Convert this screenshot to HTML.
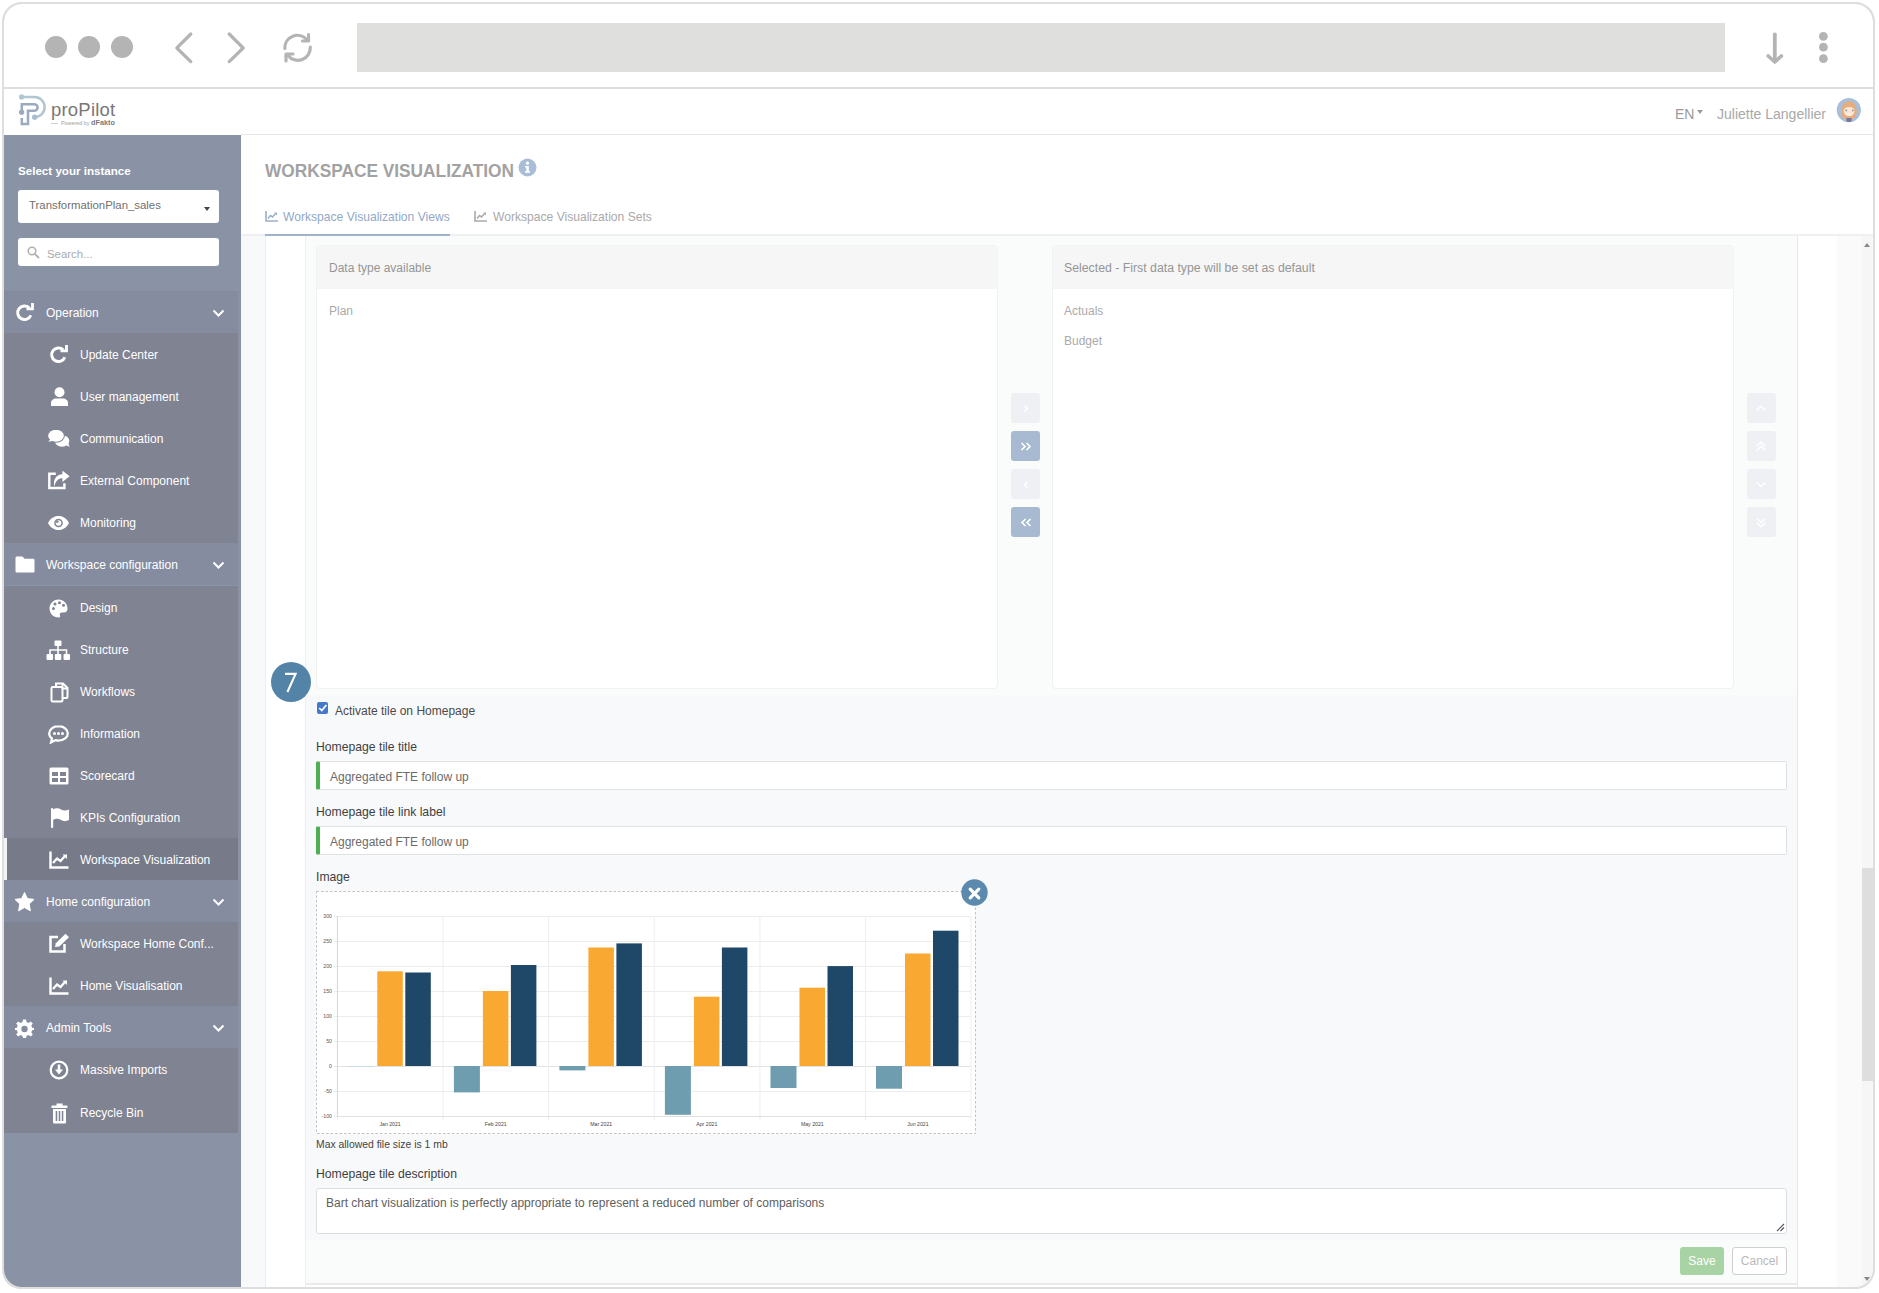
<!DOCTYPE html>
<html><head><meta charset="utf-8">
<style>
*{box-sizing:border-box;margin:0;padding:0}
html,body{width:1879px;height:1293px;overflow:hidden;background:#fff;font-family:"Liberation Sans",sans-serif}
.a{position:absolute}
#frame{position:absolute;left:2px;top:2px;width:1873px;height:1287px;border:2px solid #dedede;border-radius:20px;overflow:hidden;background:#fff}
.dot{position:absolute;width:22px;height:22px;border-radius:50%;background:#b4b4b4;top:36px}
.sb{position:absolute;left:4px;top:135px;width:237px;height:1152px;background:#8a93a6}
.hd{position:absolute;left:0;width:234px;height:42px;background:#868c9f;color:#fff;font-size:12px}
.sub{position:absolute;left:0;width:234px;background:#7f8392}
.it{position:absolute;left:0;width:234px;height:42px;color:#fff;font-size:12px}
.it span,.hd span{position:absolute;top:15px;white-space:nowrap}
.it span{left:76px}
.hd span{left:42px}
.ico{position:absolute;transform:translateY(1px)}
</style></head><body>
<div id="frame"></div>
<!-- browser toolbar -->
<div class="dot" style="left:45px"></div>
<div class="dot" style="left:78px"></div>
<div class="dot" style="left:111px"></div>
<svg class="a" style="left:160px;top:20px" width="170" height="55" viewBox="160 20 170 55">
  <polyline points="190.8,34 176.8,48 190.8,61.6" fill="none" stroke="#b4b4b4" stroke-width="3.2" stroke-linecap="round" stroke-linejoin="round"/>
  <polyline points="229.2,34 243.2,48 229.2,61.6" fill="none" stroke="#b4b4b4" stroke-width="3.2" stroke-linecap="round" stroke-linejoin="round"/>
  <path d="M284.8,48.5 A12.5,12.5 0 0 1 307,40" fill="none" stroke="#b4b4b4" stroke-width="3.2" stroke-linecap="round"/>
  <path d="M302.5,41 H308.5 V34.5" fill="none" stroke="#b4b4b4" stroke-width="3.2" stroke-linecap="round" stroke-linejoin="round"/>
  <path d="M310.3,47 A12.5,12.5 0 0 1 288,55.5" fill="none" stroke="#b4b4b4" stroke-width="3.2" stroke-linecap="round"/>
  <path d="M293,54 H286 V61" fill="none" stroke="#b4b4b4" stroke-width="3.2" stroke-linecap="round" stroke-linejoin="round"/>
</svg>
<svg class="a" style="left:1760px;top:28px" width="75" height="40" viewBox="1760 28 75 40">
  <path d="M1774.8,34.3 V61" stroke="#b4b4b4" stroke-width="3.8" stroke-linecap="round"/>
  <polyline points="1768.2,56 1774.8,62 1781.4,56" fill="none" stroke="#b4b4b4" stroke-width="3.6" stroke-linecap="round" stroke-linejoin="round"/>
  <circle cx="1823.4" cy="36.3" r="4.4" fill="#b4b4b4"/>
  <circle cx="1823.4" cy="47.2" r="4.4" fill="#b4b4b4"/>
  <circle cx="1823.4" cy="58.6" r="4.4" fill="#b4b4b4"/>
</svg>
<div class="a" style="left:357px;top:23px;width:1368px;height:49px;background:#dfdfde"></div>
<div class="a" style="left:4px;top:87px;width:1869px;height:2px;background:#dedede"></div>
<!-- app header -->
<svg class="a" style="left:0px;top:85px" width="60" height="50" viewBox="0 85 60 50">
  <path d="M21.6,96.9 H34.3 A10.2,10.2 0 0 1 34.6,117.3" fill="none" stroke="#b2c5d3" stroke-width="2.5"/>
  <circle cx="21.6" cy="96.9" r="2.6" fill="#b2c5d3"/>
  <circle cx="34.6" cy="117.2" r="2.6" fill="#a9bccc"/>
  <path d="M21.8,112 V104.2 H34.3 A3.3,3.3 0 0 1 34.3,110.8 H28 V124 H21.8 V118" fill="none" stroke="#9aabc0" stroke-width="2.5"/>
  <circle cx="21.6" cy="112.2" r="2.6" fill="#9aabc0"/>
</svg>
<div class="a" style="left:51px;top:98.5px;font-size:18.5px;color:#7a7676;letter-spacing:0.2px">proPilot</div>
<div class="a" style="left:51px;top:123px;width:7px;height:1px;background:#cfcfcf"></div>
<div class="a" style="left:61px;top:119.5px;font-size:5.4px;color:#a0a0a0">Powered by</div>
<div class="a" style="left:91px;top:118px;font-size:7.3px;font-weight:bold;color:#7a7a7a">dFakto</div>
<div class="a" style="left:241px;top:134px;width:1632px;height:1px;background:#e8e8e8"></div>
<div class="a" style="left:1675px;top:106px;font-size:14px;color:#9a9a9a">EN</div>
<div class="a" style="left:1697px;top:110px;width:0;height:0;border-left:3.5px solid transparent;border-right:3.5px solid transparent;border-top:4px solid #9a9a9a"></div>
<div class="a" style="left:1717px;top:106px;font-size:14px;color:#a8a8a8">Juliette Langellier</div>
<svg class="a" style="left:1836px;top:98px" width="26" height="26" viewBox="0 0 26 26">
  <circle cx="12.8" cy="12.1" r="12.1" fill="#a9bfd9"/>
  <path d="M5,19 C7,17 5.5,14 6,10 C7,5 10,3 13,3.2 C17,3.3 20,6 20.3,10.5 C20.5,13 21.5,14 20.5,15.5 C19.5,17 20.5,18.5 19,20 L16,20.5 L9,20.5 Z" fill="#e5ac7e"/>
  <ellipse cx="13.1" cy="13" rx="5.4" ry="5.2" fill="#fbe7d2"/>
  <path d="M7.7,11.5 C8,7 11,5.5 13.5,6.5 C16,5.5 18.5,8 18.5,11.5 C17,9.5 15,8.5 13.5,9.5 C11.5,8.5 9.5,9.5 7.7,11.5Z" fill="#e5ac7e"/>
  <circle cx="10.3" cy="12.4" r="0.9" fill="#8a8f99"/>
  <circle cx="16.8" cy="12.4" r="0.9" fill="#8a8f99"/>
  <ellipse cx="13.2" cy="15.9" rx="1.7" ry="0.9" fill="#f4f0f0"/>
  <path d="M10.4,20 H15.6 V23.6 C14,24 12,24 10.4,23.6Z" fill="#7b7790"/>
</svg>

<!-- sidebar -->
<div class="sb">
  <div class="a" style="left:14px;top:29px;font-size:11.6px;font-weight:bold;color:#fff">Select your instance</div>
  <div class="a" style="left:14px;top:55px;width:201px;height:33px;background:#fff;border-radius:3px"></div>
  <div class="a" style="left:25px;top:63.5px;font-size:11.4px;color:#707070">TransformationPlan_sales</div>
  <div class="a" style="left:200px;top:72px;width:0;height:0;border-left:3.5px solid transparent;border-right:3.5px solid transparent;border-top:4px solid #444"></div>
  <div class="a" style="left:14px;top:103px;width:201px;height:28px;background:#fff;border-radius:3px"></div>
  <svg class="a" style="left:23px;top:111px" width="13" height="13" viewBox="0 0 13 13"><circle cx="5" cy="5" r="3.8" fill="none" stroke="#b0b0b0" stroke-width="1.5"/><line x1="7.8" y1="7.8" x2="11.5" y2="11.5" stroke="#b0b0b0" stroke-width="1.8" stroke-linecap="round"/></svg>
  <div class="a" style="left:43px;top:112.5px;font-size:11.4px;color:#aaa">Search...</div>
</div>

<div class="sb" style="background:transparent">
  <!-- Operation -->
  <div class="hd" style="top:156.00px"><svg class="ico" style="left:11px;top:11px" width="20" height="20" viewBox="0 0 20 20"><path d="M15.8,12.2 A6.8,6.8 0 1 1 14.2,4.8" fill="none" stroke="#fff" stroke-width="3"/><path d="M11.5,5.8 L17.5,5.8 L17.5,-0.2" fill="none" stroke="#fff" stroke-width="2.8" stroke-linejoin="miter"/></svg><span>Operation</span><svg class="ico" style="left:208px;top:17px" width="13" height="9" viewBox="0 0 13 9"><polyline points="1.5,1.5 6.5,6.5 11.5,1.5" fill="none" stroke="#fff" stroke-width="2"/></svg></div>
  <div class="sub" style="top:198.08px;height:210.40px">
    <div class="it" style="top:0"><svg class="ico" style="left:45px;top:11px" width="20" height="20" viewBox="0 0 20 20"><path d="M15.8,12.2 A6.8,6.8 0 1 1 14.2,4.8" fill="none" stroke="#fff" stroke-width="3"/><path d="M11.5,5.8 L17.5,5.8 L17.5,-0.2" fill="none" stroke="#fff" stroke-width="2.8"/></svg><span>Update Center</span></div>
    <div class="it" style="top:42.08px"><svg class="ico" style="left:45.5px;top:11px" width="19" height="20" viewBox="0 0 19 20"><circle cx="9.5" cy="5.3" r="5" fill="#fff"/><path d="M1,19 V16 C1,13 3.5,11.5 6,11.5 H13 C15.5,11.5 18,13 18,16 V19 Z" fill="#fff"/></svg><span>User management</span></div>
    <div class="it" style="top:84.16px"><svg class="ico" style="left:43px;top:12px" width="24" height="20" viewBox="47 430.24 24 20"><ellipse cx="62" cy="441.2" rx="7.3" ry="5.8" fill="#fff"/><path d="M65.5,445 L69.6,447.2 L68.2,443Z" fill="#fff"/><ellipse cx="56" cy="436" rx="8.9" ry="6.9" fill="#7f8392"/><ellipse cx="56" cy="436" rx="7.9" ry="5.9" fill="#fff"/><path d="M50.5,439.5 L48.2,442 L53.5,441Z" fill="#fff"/></svg><span>Communication</span></div>
    <div class="it" style="top:126.24px"><svg class="ico" style="left:44px;top:11px" width="23" height="21" viewBox="48 471.32 23 21"><path d="M55.8,474.1 H49.3 V488.3 H64.4 V483.6" fill="none" stroke="#fff" stroke-width="2.4"/><path d="M54.2,486.8 C53,480 56,475 62.4,474.6 V470.9 L69.6,476.6 L62.4,482.4 V478.6 C58.5,478.6 55.8,481 54.2,486.8Z" fill="#fff"/></svg><span>External Component</span></div>
    <div class="it" style="top:168.32px"><svg class="ico" style="left:43px;top:13px" width="23" height="16" viewBox="0 0 23 16"><path d="M1,8 C4,2.5 8,1 11.5,1 C15,1 19,2.5 22,8 C19,13.5 15,15 11.5,15 C8,15 4,13.5 1,8Z" fill="#fff"/><circle cx="11.5" cy="8" r="4.3" fill="#7f8392"/><circle cx="11.5" cy="8" r="2.8" fill="#fff"/><circle cx="10.3" cy="6.8" r="1.3" fill="#7f8392"/></svg><span>Monitoring</span></div>
  </div>
  <!-- Workspace configuration -->
  <div class="hd" style="top:408.48px"><svg class="ico" style="left:11px;top:12px" width="20" height="17" viewBox="0 0 20 17"><path d="M0.5,2 C0.5,1 1,0.5 2,0.5 H7.5 L9.5,2.8 H18 C19,2.8 19.5,3.3 19.5,4.3 V15 C19.5,16 19,16.5 18,16.5 H2 C1,16.5 0.5,16 0.5,15Z" fill="#fff"/></svg><span>Workspace configuration</span><svg class="ico" style="left:208px;top:17px" width="13" height="9" viewBox="0 0 13 9"><polyline points="1.5,1.5 6.5,6.5 11.5,1.5" fill="none" stroke="#fff" stroke-width="2"/></svg></div>
  <div class="sub" style="top:450.56px;height:294.56px">
    <div class="it" style="top:0"><svg class="ico" style="left:45px;top:12px" width="19" height="19" viewBox="0 0 19 19"><path d="M9.5,0.5 C4.5,0.5 0.5,4.5 0.5,9.5 C0.5,14.5 4.5,18.5 9.5,18.5 C11,18.5 11.5,17.5 11,16.5 C10.3,15 11,13.5 12.8,13.5 H15 C17,13.5 18.5,12 18.5,9.5 C18.5,4.5 14.5,0.5 9.5,0.5Z" fill="#fff"/><circle cx="4.5" cy="9.5" r="1.5" fill="#7f8392"/><circle cx="6" cy="5" r="1.5" fill="#7f8392"/><circle cx="10.5" cy="3.8" r="1.5" fill="#7f8392"/><circle cx="14.5" cy="6.3" r="1.5" fill="#7f8392"/></svg><span>Design</span></div>
    <div class="it" style="top:42.08px"><svg class="ico" style="left:42px;top:11px" width="25" height="21" viewBox="0 0 25 21"><rect x="8.5" y="0.5" width="7" height="5.5" rx="1" fill="#fff"/><path d="M12,6 V10 M4,14 V10 H20.5 V14 M12,10 V14" fill="none" stroke="#fff" stroke-width="1.6"/><rect x="0.5" y="14" width="6.5" height="6" rx="1" fill="#fff"/><rect x="8.8" y="14" width="6.5" height="6" rx="1" fill="#fff"/><rect x="17.5" y="14" width="6.5" height="6" rx="1" fill="#fff"/></svg><span>Structure</span></div>
    <div class="it" style="top:84.16px"><svg class="ico" style="left:46px;top:11px" width="19" height="21" viewBox="0 0 19 21"><path d="M6,4.5 V1.5 H13 L17.5,6 V15 C17.5,15.5 17,16 16.5,16 H13" fill="none" stroke="#fff" stroke-width="2"/><path d="M12.5,1.5 V6.5 H17.5" fill="none" stroke="#fff" stroke-width="1.8"/><rect x="1.5" y="5" width="11" height="14.5" rx="1.3" fill="none" stroke="#fff" stroke-width="2"/></svg><span>Workflows</span></div>
    <div class="it" style="top:126.24px"><svg class="ico" style="left:44px;top:12px" width="21" height="19" viewBox="0 0 21 19"><path d="M10.5,1.2 C5.2,1.2 1.2,4.6 1.2,8.4 C1.2,10.5 2.3,12.2 4,13.4 L3,17.5 L7.5,15.1 C8.5,15.4 9.5,15.6 10.5,15.6 C15.8,15.6 19.8,12.2 19.8,8.4 C19.8,4.6 15.8,1.2 10.5,1.2Z" fill="none" stroke="#fff" stroke-width="2.2"/><circle cx="6.5" cy="8.4" r="1.5" fill="#fff"/><circle cx="10.5" cy="8.4" r="1.5" fill="#fff"/><circle cx="14.5" cy="8.4" r="1.5" fill="#fff"/></svg><span>Information</span></div>
    <div class="it" style="top:168.32px"><svg class="ico" style="left:45px;top:12px" width="20" height="18" viewBox="0 0 20 18"><rect x="0.5" y="0.5" width="19" height="17" rx="1.5" fill="#fff"/><rect x="3" y="5" width="6" height="4" fill="#7f8392"/><rect x="11" y="5" width="6" height="4" fill="#7f8392"/><rect x="3" y="11" width="6" height="4" fill="#7f8392"/><rect x="11" y="11" width="6" height="4" fill="#7f8392"/></svg><span>Scorecard</span></div>
    <div class="it" style="top:210.40px"><svg class="ico" style="left:46px;top:10px" width="20" height="21" viewBox="0 0 20 21"><rect x="1" y="1" width="2.2" height="20" rx="1" fill="#fff"/><path d="M3,2.5 C6,0.5 9,1.5 11,2.5 C13.5,3.8 16,3.8 19,2.5 V13 C16,14.5 13.5,14.5 11,13 C9,12 6,11 3,13Z" fill="#fff"/></svg><span>KPIs Configuration</span></div>
    <div class="it" style="top:252.48px;background:#777a89"><div class="a" style="left:0;top:0;width:3px;height:42px;background:#f4f4f4"></div><svg class="ico" style="left:45px;top:12px" width="20" height="18" viewBox="0 0 20 18"><path d="M1.5,0.5 V16.5 H19.5" fill="none" stroke="#fff" stroke-width="2.4"/><path d="M4,12 L8,7.5 L11.5,10 L16,5" fill="none" stroke="#fff" stroke-width="2.4"/><path d="M13.5,3.5 H18 V8Z" fill="#fff"/></svg><span>Workspace Visualization</span></div>
  </div>
  <!-- Home configuration -->
  <div class="hd" style="top:745.12px"><svg class="ico" style="left:10px;top:11px" width="21" height="20" viewBox="0 0 21 20"><path d="M10.5,0.5 L13.4,6.6 L20,7.4 L15.2,12 L16.4,18.8 L10.5,15.6 L4.6,18.8 L5.8,12 L1,7.4 L7.6,6.6Z" fill="#fff" stroke="#fff" stroke-width="1" stroke-linejoin="round"/></svg><span>Home configuration</span><svg class="ico" style="left:208px;top:17px" width="13" height="9" viewBox="0 0 13 9"><polyline points="1.5,1.5 6.5,6.5 11.5,1.5" fill="none" stroke="#fff" stroke-width="2"/></svg></div>
  <div class="sub" style="top:787.20px;height:84.16px">
    <div class="it" style="top:0"><svg class="ico" style="left:44px;top:10px" width="22" height="21" viewBox="0 0 22 21"><path d="M10,4 H2.5 V18.5 H16.5 V11" fill="none" stroke="#fff" stroke-width="2.5"/><path d="M7,14 L7.8,10.3 L17.5,0.8 L21,4.2 L11.3,13.6 Z" fill="#fff"/></svg><span>Workspace Home Conf...</span></div>
    <div class="it" style="top:42.08px"><svg class="ico" style="left:45px;top:12px" width="20" height="18" viewBox="0 0 20 18"><path d="M1.5,0.5 V16.5 H19.5" fill="none" stroke="#fff" stroke-width="2.4"/><path d="M4,12 L8,7.5 L11.5,10 L16,5" fill="none" stroke="#fff" stroke-width="2.4"/><path d="M13.5,3.5 H18 V8Z" fill="#fff"/></svg><span>Home Visualisation</span></div>
  </div>
  <!-- Admin Tools -->
  <div class="hd" style="top:871.36px"><svg class="ico" style="left:11px;top:12px" width="19" height="19" viewBox="0 0 19 19"><path d="M8,0.5 H11 L11.5,3 L13.6,3.9 L15.7,2.4 L17.8,4.5 L16.3,6.6 L17.1,8.7 L19,9 V11 L17.1,11.3 L16.3,13.4 L17.8,15.5 L15.7,17.6 L13.6,16.1 L11.5,16.9 L11,19 H8 L7.5,16.9 L5.4,16.1 L3.3,17.6 L1.2,15.5 L2.7,13.4 L1.9,11.3 L0,11 V9 L1.9,8.7 L2.7,6.6 L1.2,4.5 L3.3,2.4 L5.4,3.9 L7.5,3Z" fill="#fff"/><circle cx="9.5" cy="10" r="3.2" fill="#868c9f"/></svg><span>Admin Tools</span><svg class="ico" style="left:208px;top:17px" width="13" height="9" viewBox="0 0 13 9"><polyline points="1.5,1.5 6.5,6.5 11.5,1.5" fill="none" stroke="#fff" stroke-width="2"/></svg></div>
  <div class="sub" style="top:913.44px;height:84.16px">
    <div class="it" style="top:0"><svg class="ico" style="left:45px;top:11px" width="20" height="20" viewBox="0 0 20 20"><circle cx="10" cy="10" r="8.3" fill="none" stroke="#fff" stroke-width="2.2"/><path d="M10,4.5 V12" stroke="#fff" stroke-width="2.6"/><path d="M6,9.5 L10,14.5 L14,9.5Z" fill="#fff"/></svg><span>Massive Imports</span></div>
    <div class="it" style="top:42.08px"><svg class="ico" style="left:47px;top:11px" width="17" height="21" viewBox="0 0 17 21"><rect x="0.5" y="2.5" width="16" height="2.5" rx="0.5" fill="#fff"/><rect x="5.5" y="0.5" width="6" height="3" fill="#fff"/><path d="M2,6 H15 V19 C15,20 14.5,20.5 13.5,20.5 H3.5 C2.5,20.5 2,20 2,19Z" fill="#fff"/><rect x="4.7" y="8" width="1.5" height="10" fill="#7f8392"/><rect x="7.75" y="8" width="1.5" height="10" fill="#7f8392"/><rect x="10.8" y="8" width="1.5" height="10" fill="#7f8392"/></svg><span>Recycle Bin</span></div>
  </div>
</div>

<!-- main title -->
<div class="a" style="left:265px;top:160.5px;font-size:17.3px;font-weight:bold;color:#a2a2a2;transform:scaleY(1.03);transform-origin:0 50%">WORKSPACE VISUALIZATION</div>
<svg class="a" style="left:518px;top:158px" width="19" height="19" viewBox="0 0 19 19"><circle cx="9.5" cy="9.5" r="9" fill="#a9bdd6"/><circle cx="9.5" cy="5.2" r="1.6" fill="#fff"/><path d="M7,8 H10.8 V13.3 H12 V14.8 H7 V13.3 H8.3 V9.5 H7Z" fill="#fff"/></svg>
<!-- tabs -->
<svg class="a" style="left:265px;top:211px" width="13" height="11" viewBox="0 0 13 11"><path d="M1,0 V10 H13" fill="none" stroke="#9bb0cc" stroke-width="1.6"/><path d="M3,7.5 L5.5,4.5 L7.5,6 L10.5,2.8" fill="none" stroke="#9bb0cc" stroke-width="1.6"/><path d="M9,1.5 H12 V4.5Z" fill="#9bb0cc"/></svg>
<div class="a" style="left:283px;top:210px;font-size:12.1px;color:#92a8c7">Workspace Visualization Views</div>
<svg class="a" style="left:474px;top:211px" width="13" height="11" viewBox="0 0 13 11"><path d="M1,0 V10 H13" fill="none" stroke="#ababab" stroke-width="1.6"/><path d="M3,7.5 L5.5,4.5 L7.5,6 L10.5,2.8" fill="none" stroke="#ababab" stroke-width="1.6"/><path d="M9,1.5 H12 V4.5Z" fill="#ababab"/></svg>
<div class="a" style="left:493px;top:210px;font-size:12.1px;color:#a9a9a9">Workspace Visualization Sets</div>
<div class="a" style="left:241px;top:234px;width:1632px;height:2px;background:#eef0f2"></div>
<div class="a" style="left:265px;top:234px;width:185px;height:2px;background:#9fb3cd"></div>

<!-- content columns -->
<div class="a" style="left:241px;top:236px;width:24px;height:1051px;background:#f8f9fa"></div>
<div class="a" style="left:265px;top:236px;width:1px;height:1051px;background:#eceef0"></div>
<div class="a" style="left:305px;top:236px;width:1px;height:1051px;background:#eceef0"></div>
<div class="a" style="left:306px;top:236px;width:1491px;height:1047px;background:#fafbfb"></div>
<div class="a" style="left:1797px;top:236px;width:1px;height:1051px;background:#e6e8ea"></div>
<div class="a" style="left:1837px;top:236px;width:36px;height:1051px;background:#fafafa"></div>
<div class="a" style="left:1862px;top:236px;width:11px;height:1051px;background:#f6f6f6"></div>
<div class="a" style="left:1862px;top:868px;width:11px;height:213px;background:#dedede"></div>
<div class="a" style="left:1864px;top:243px;width:0;height:0;border-left:3.5px solid transparent;border-right:3.5px solid transparent;border-bottom:4px solid #888"></div>
<div class="a" style="left:1864px;top:1277px;width:0;height:0;border-left:3.5px solid transparent;border-right:3.5px solid transparent;border-top:4px solid #888"></div>
<div class="a" style="left:306px;top:1283px;width:1491px;height:2px;background:#ebebeb"></div>

<!-- panels -->
<div class="a" style="left:316px;top:245px;width:682px;height:444px;background:#fff;border:1px solid #f1f1f1;border-radius:4px;overflow:hidden">
  <div class="a" style="left:0;top:0;width:682px;height:43px;background:#f6f6f6"></div>
  <div class="a" style="left:12px;top:15px;font-size:12px;color:#959595">Data type available</div>
  <div class="a" style="left:12px;top:58px;font-size:12px;color:#aaa">Plan</div>
</div>
<div class="a" style="left:1052px;top:245px;width:682px;height:444px;background:#fff;border:1px solid #f1f1f1;border-radius:4px;overflow:hidden">
  <div class="a" style="left:0;top:0;width:682px;height:43px;background:#f6f6f6"></div>
  <div class="a" style="left:11px;top:15px;font-size:12.3px;color:#959595">Selected - First data type will be set as default</div>
  <div class="a" style="left:11px;top:58px;font-size:12px;color:#aaa">Actuals</div>
  <div class="a" style="left:11px;top:88px;font-size:12px;color:#aaa">Budget</div>
</div>
<!-- transfer buttons -->
<div class="a" style="left:1011px;top:392.5px;width:29px;height:30px;background:#eef0f4;border-radius:3px"></div>
<div class="a" style="left:1011px;top:430.8px;width:29px;height:30px;background:#a8bad1;border-radius:3px"></div>
<div class="a" style="left:1011px;top:469px;width:29px;height:30px;background:#eef0f4;border-radius:3px"></div>
<div class="a" style="left:1011px;top:507.2px;width:29px;height:30px;background:#a8bad1;border-radius:3px"></div>
<svg class="a" style="left:1011.5px;top:393.5px" width="28" height="143" viewBox="0 0 28 143">
  <polyline points="12.5,11.5 15.5,14.5 12.5,17.5" fill="none" stroke="#fff" stroke-width="1.4"/>
  <polyline points="14.5,49 18,52.5 14.5,56" fill="none" stroke="#fff" stroke-width="1.6" transform="translate(0,0)"/>
  <polyline points="9.5,49 13,52.5 9.5,56" fill="none" stroke="#fff" stroke-width="1.6"/>
  <polyline points="15.5,87.5 12.5,90.5 15.5,93.5" fill="none" stroke="#fff" stroke-width="1.4"/>
  <polyline points="13.5,125 10,128.5 13.5,132" fill="none" stroke="#fff" stroke-width="1.6"/>
  <polyline points="18.5,125 15,128.5 18.5,132" fill="none" stroke="#fff" stroke-width="1.6"/>
</svg>
<div class="a" style="left:1747px;top:392.5px;width:28.5px;height:30px;background:#eef0f4;border-radius:3px"></div>
<div class="a" style="left:1747px;top:430.8px;width:28.5px;height:30px;background:#eef0f4;border-radius:3px"></div>
<div class="a" style="left:1747px;top:469px;width:28.5px;height:30px;background:#eef0f4;border-radius:3px"></div>
<div class="a" style="left:1747px;top:507.2px;width:28.5px;height:30px;background:#eef0f4;border-radius:3px"></div>
<svg class="a" style="left:1747px;top:393.5px" width="28" height="143" viewBox="0 0 28 143">
  <polyline points="9.8,16.3 14,12.3 18.2,16.3" fill="none" stroke="#fff" stroke-width="1.5"/>
  <polyline points="9.8,52.3 14,48.3 18.2,52.3" fill="none" stroke="#fff" stroke-width="1.5"/>
  <polyline points="9.8,56.5 14,52.5 18.2,56.5" fill="none" stroke="#fff" stroke-width="1.5"/>
  <polyline points="9.8,88.5 14,92.5 18.2,88.5" fill="none" stroke="#fff" stroke-width="1.5"/>
  <polyline points="9.8,124.5 14,128.5 18.2,124.5" fill="none" stroke="#fff" stroke-width="1.5"/>
  <polyline points="9.8,128.7 14,132.7 18.2,128.7" fill="none" stroke="#fff" stroke-width="1.5"/>
</svg>

<!-- form area -->
<div class="a" style="left:306px;top:695px;width:1491px;height:545px;background:#f8f9fa"></div>
<div class="a" style="left:271px;top:662px;width:40px;height:40px;border-radius:50%;background:#5483a8"></div><svg class="a" style="left:271px;top:662px" width="40" height="40" viewBox="271 662 40 40"><path d="M285,673.9 H295.6 L287.4,692" fill="none" stroke="#fff" stroke-width="2.1" stroke-linejoin="miter"/></svg>
<div class="a" style="left:316.5px;top:702px;width:11.5px;height:11.5px;background:#4479c9;border-radius:2px"></div>
<svg class="a" style="left:316.5px;top:702px" width="12" height="12" viewBox="0 0 12 12"><polyline points="2.2,6 4.8,8.6 9.4,3" fill="none" stroke="#fff" stroke-width="1.7"/></svg>
<div class="a" style="left:335px;top:704px;font-size:12px;color:#4a4a4a">Activate tile on Homepage</div>
<div class="a" style="left:316px;top:740px;font-size:12.2px;color:#3f3f3f">Homepage tile title</div>
<div class="a" style="left:316px;top:761px;width:1471px;height:29px;background:#fff;border:1px solid #dfe2e5;border-left:4px solid #4caf50;border-radius:2px"></div>
<div class="a" style="left:330px;top:770px;font-size:12px;color:#6b6b6b">Aggregated FTE follow up</div>
<div class="a" style="left:316px;top:805px;font-size:12.2px;color:#3f3f3f">Homepage tile link label</div>
<div class="a" style="left:316px;top:826px;width:1471px;height:29px;background:#fff;border:1px solid #dfe2e5;border-left:4px solid #4caf50;border-radius:2px"></div>
<div class="a" style="left:330px;top:835px;font-size:12px;color:#6b6b6b">Aggregated FTE follow up</div>
<div class="a" style="left:316px;top:870px;font-size:12.2px;color:#3f3f3f">Image</div>

<svg class="a" style="left:316px;top:891px" width="661" height="244" viewBox="0 0 661 244">
<rect x="0.5" y="0.5" width="659" height="242" fill="#fff" stroke="#c3c3c3" stroke-width="1" stroke-dasharray="2.5,2"/>
<line x1="17.899999999999977" y1="25.5" x2="654.6" y2="25.5" stroke="#ececec" stroke-width="1"/>
<text x="16" y="27" font-size="5.2" text-anchor="end" fill="#555" font-family="Liberation Sans">300</text>
<line x1="17.899999999999977" y1="50.5" x2="654.6" y2="50.5" stroke="#ececec" stroke-width="1"/>
<text x="16" y="52" font-size="5.2" text-anchor="end" fill="#555" font-family="Liberation Sans">250</text>
<line x1="17.899999999999977" y1="75.5" x2="654.6" y2="75.5" stroke="#ececec" stroke-width="1"/>
<text x="16" y="77" font-size="5.2" text-anchor="end" fill="#555" font-family="Liberation Sans">200</text>
<line x1="17.899999999999977" y1="100.5" x2="654.6" y2="100.5" stroke="#ececec" stroke-width="1"/>
<text x="16" y="102" font-size="5.2" text-anchor="end" fill="#555" font-family="Liberation Sans">150</text>
<line x1="17.899999999999977" y1="125.5" x2="654.6" y2="125.5" stroke="#ececec" stroke-width="1"/>
<text x="16" y="127" font-size="5.2" text-anchor="end" fill="#555" font-family="Liberation Sans">100</text>
<line x1="17.899999999999977" y1="150.5" x2="654.6" y2="150.5" stroke="#ececec" stroke-width="1"/>
<text x="16" y="152" font-size="5.2" text-anchor="end" fill="#555" font-family="Liberation Sans">50</text>
<line x1="17.899999999999977" y1="175.5" x2="654.6" y2="175.5" stroke="#e2e2e2" stroke-width="1"/>
<text x="16" y="177" font-size="5.2" text-anchor="end" fill="#555" font-family="Liberation Sans">0</text>
<line x1="17.899999999999977" y1="200.5" x2="654.6" y2="200.5" stroke="#ececec" stroke-width="1"/>
<text x="16" y="202" font-size="5.2" text-anchor="end" fill="#555" font-family="Liberation Sans">-50</text>
<line x1="17.899999999999977" y1="225.5" x2="654.6" y2="225.5" stroke="#ececec" stroke-width="1"/>
<text x="16" y="227" font-size="5.2" text-anchor="end" fill="#555" font-family="Liberation Sans">-100</text>
<line x1="21.4" y1="25" x2="21.4" y2="229" stroke="#eeeeee" stroke-width="1"/>
<line x1="127.0" y1="25" x2="127.0" y2="229" stroke="#eeeeee" stroke-width="1"/>
<line x1="232.6" y1="25" x2="232.6" y2="229" stroke="#eeeeee" stroke-width="1"/>
<line x1="338.2" y1="25" x2="338.2" y2="229" stroke="#eeeeee" stroke-width="1"/>
<line x1="443.9" y1="25" x2="443.9" y2="229" stroke="#eeeeee" stroke-width="1"/>
<line x1="549.5" y1="25" x2="549.5" y2="229" stroke="#eeeeee" stroke-width="1"/>
<line x1="655.1" y1="25" x2="655.1" y2="229" stroke="#eeeeee" stroke-width="1"/>
<line x1="21.399999999999977" y1="25" x2="21.399999999999977" y2="226" stroke="#d6d6d6" stroke-width="1"/>
<line x1="20.899999999999977" y1="225.5" x2="654.6" y2="225.5" stroke="#e0e0e0" stroke-width="1"/>
<rect x="32.3" y="175.0" width="26" height="1.0" fill="#c9dbe2"/>
<rect x="61.3" y="80.3" width="25.5" height="94.7" fill="#f9a931"/>
<rect x="89.3" y="81.5" width="25.5" height="93.5" fill="#1f4767"/>
<text x="74.1" y="234.5" font-size="5.2" text-anchor="middle" fill="#444" font-family="Liberation Sans">Jan 2021</text>
<rect x="137.9" y="175.0" width="26" height="26.4" fill="#6f9db0"/>
<rect x="166.9" y="100.0" width="25.5" height="75.0" fill="#f9a931"/>
<rect x="194.9" y="74.0" width="25.5" height="101.0" fill="#1f4767"/>
<text x="179.7" y="234.5" font-size="5.2" text-anchor="middle" fill="#444" font-family="Liberation Sans">Feb 2021</text>
<rect x="243.4" y="175.0" width="26" height="4.4" fill="#6f9db0"/>
<rect x="272.4" y="56.5" width="25.5" height="118.5" fill="#f9a931"/>
<rect x="300.4" y="52.4" width="25.5" height="122.6" fill="#1f4767"/>
<text x="285.2" y="234.5" font-size="5.2" text-anchor="middle" fill="#444" font-family="Liberation Sans">Mar 2021</text>
<rect x="348.9" y="175.0" width="26" height="48.8" fill="#6f9db0"/>
<rect x="377.9" y="105.7" width="25.5" height="69.3" fill="#f9a931"/>
<rect x="405.9" y="56.5" width="25.5" height="118.5" fill="#1f4767"/>
<text x="390.8" y="234.5" font-size="5.2" text-anchor="middle" fill="#444" font-family="Liberation Sans">Apr 2021</text>
<rect x="454.5" y="175.0" width="26" height="22.0" fill="#6f9db0"/>
<rect x="483.5" y="96.7" width="25.5" height="78.3" fill="#f9a931"/>
<rect x="511.5" y="75.1" width="25.5" height="99.9" fill="#1f4767"/>
<text x="496.3" y="234.5" font-size="5.2" text-anchor="middle" fill="#444" font-family="Liberation Sans">May 2021</text>
<rect x="560.0" y="175.0" width="26" height="22.7" fill="#6f9db0"/>
<rect x="589.0" y="62.5" width="25.5" height="112.5" fill="#f9a931"/>
<rect x="617.0" y="39.7" width="25.5" height="135.3" fill="#1f4767"/>
<text x="601.9" y="234.5" font-size="5.2" text-anchor="middle" fill="#444" font-family="Liberation Sans">Jun 2021</text>
</svg>
<svg class="a" style="left:961px;top:879px" width="27" height="27" viewBox="0 0 27 27"><circle cx="13.5" cy="13.5" r="13.2" fill="#5b8aae"/><path d="M9.2,10.2 L17.8,18.8 M17.8,10.2 L9.2,18.8" stroke="#fff" stroke-width="3.2" stroke-linecap="round"/></svg>
<div class="a" style="left:316px;top:1139px;font-size:10.4px;color:#444">Max allowed file size is 1 mb</div>
<div class="a" style="left:316px;top:1167px;font-size:12.2px;color:#3f3f3f">Homepage tile description</div>
<div class="a" style="left:316px;top:1188px;width:1471px;height:46px;background:#fff;border:1px solid #dcdfe2;border-radius:3px"></div>
<div class="a" style="left:326px;top:1196px;font-size:12px;color:#606060">Bart chart visualization is perfectly appropriate to represent a reduced number of comparisons</div>
<svg class="a" style="left:1776px;top:1223px" width="9" height="9" viewBox="0 0 9 9"><path d="M1,8 L8,1 M4.5,8 L8,4.5" stroke="#555" stroke-width="1.1"/></svg>
<div class="a" style="left:1680px;top:1247px;width:44px;height:28px;background:#a8d3a4;border-radius:3px;color:#fff;font-size:12px;text-align:center;line-height:29px">Save</div>
<div class="a" style="left:1732px;top:1247px;width:55px;height:28px;background:#fff;border:1px solid #cfcfcf;border-radius:3px;color:#b9b9b9;font-size:12px;text-align:center;line-height:27px">Cancel</div>

<div class="a" style="left:2px;top:2px;width:1873px;height:1287px;border:2px solid #dedede;border-radius:20px;box-shadow:0 0 0 30px #fff;pointer-events:none"></div>
</body></html>
